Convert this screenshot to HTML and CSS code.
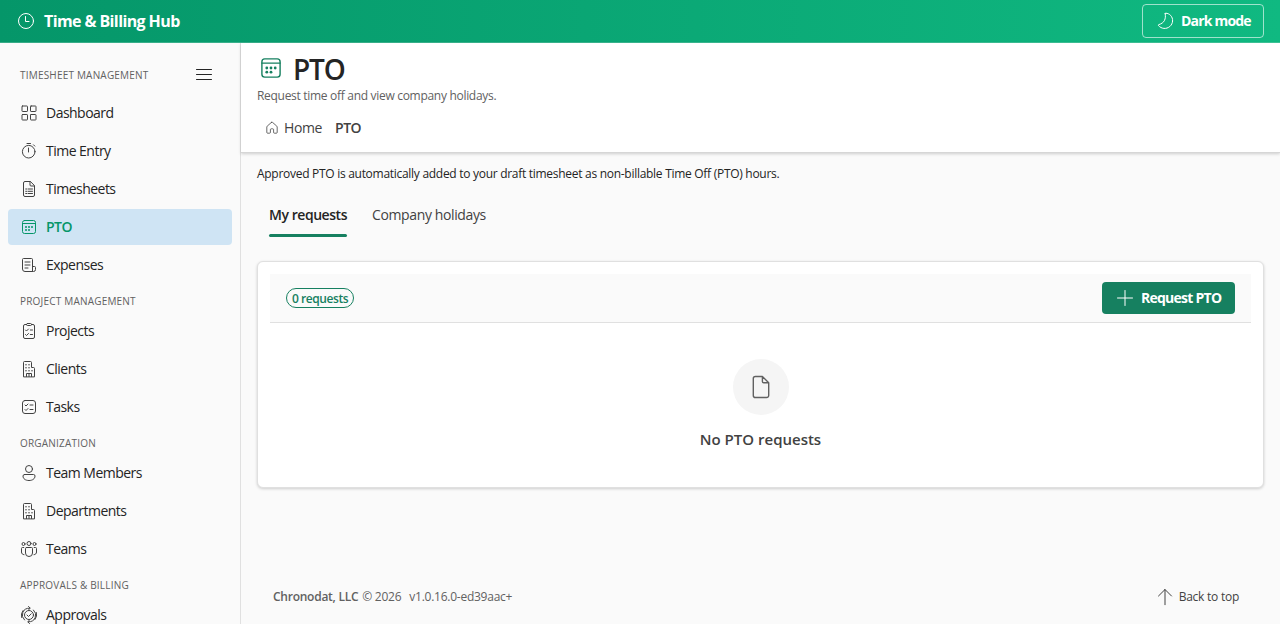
FILE: index.html
```
<!doctype html>
<html lang="en">
  <head>
    <title>PTO - Time &amp; Billing Hub</title>
    <meta charset="UTF-8" />
    <meta name="viewport" content="width=device-width, initial-scale=1.0" />
    <link rel="stylesheet" href="styles.css">
  </head>

  <body>
    <svg class="sprite" xmlns="http://www.w3.org/2000/svg">
      <symbol id="i-clock" viewBox="0 0 20 20">
        <circle cx="10" cy="10" r="7.5" />
        <path d="M9.5 5.5v5h3.5" />
      </symbol>
      <symbol id="i-moon" viewBox="0 0 20 20">
        <path d="M10.200 2.700c.9 5.300-.7 9.300-6.600 11-.4.100-.5.500-.2.800 3 3.500 8 3.900 11.400 1 3.500-3 3.700-8 .8-11.100-1.300-1.400-3-2.100-4.900-2.200-.4 0-.6.100-.5.500z" />
      </symbol>
      <symbol id="i-menu" viewBox="0 0 20 20">
        <path d="M2.500 4.500h15M2.500 9.500h15M2.500 14.500h15" />
      </symbol>
      <symbol id="i-grid" viewBox="0 0 20 20">
        <rect x="3" y="3" width="5.500" height="5.500" rx=".6" />
        <rect x="11.500" y="3" width="5.500" height="5.500" rx=".6" />
        <rect x="3" y="11.500" width="5.500" height="5.500" rx=".6" />
        <rect x="11.500" y="11.500" width="5.500" height="5.500" rx=".6" />
      </symbol>
      <symbol id="i-timer" viewBox="0 0 20 20">
        <circle cx="9.700" cy="10.700" r="6.300" />
        <path d="M8 2.500h3.500M9.500 7v4M14.500 3.800l1.300 1.300" />
      </symbol>
      <symbol id="i-doc-list" viewBox="0 0 20 20">
        <path d="M11 2.500H6A1.500 1.500 0 0 0 4.500 4v12A1.500 1.500 0 0 0 6 17.500h8a1.500 1.500 0 0 0 1.500-1.500V7zM11 2.500V6a1 1 0 0 0 1 1h3.500M9 10h4.500M9 12.300h4.500M9 14.500h4.500M6.700 10h1M6.700 12.300h1M6.700 14.500h1" />
      </symbol>
      <symbol id="i-calendar" viewBox="0 0 20 20">
        <rect x="3.500" y="3.500" width="13" height="13" rx="2" />
        <path d="M3.500 6.500h13" />
        <g class="dots">
          <circle cx="7" cy="10" r="1" />
          <circle cx="10" cy="10" r="1" />
          <circle cx="13" cy="10" r="1" />
          <circle cx="7" cy="13" r="1" />
          <circle cx="10" cy="13" r="1" />
        </g>
      </symbol>
      <symbol id="i-receipt" viewBox="0 0 20 20">
        <path d="M13.500 16.500H6A2.500 2.500 0 0 1 3.500 14V4.500a1 1 0 0 1 1-1h8a1 1 0 0 1 1 1v12h1a2 2 0 0 0 2-2v-2a1 1 0 0 0-1-1h-2M6 7h5M6 10h5M6 13h3" />
      </symbol>
      <symbol id="i-clipboard" viewBox="0 0 20 20">
        <path d="M7.500 3.500H6A1.500 1.500 0 0 0 4.500 5v11A1.500 1.500 0 0 0 6 17.500h8a1.500 1.500 0 0 0 1.500-1.500V5A1.500 1.500 0 0 0 14 3.500h-1.500" />
        <rect x="7.500" y="2.500" width="5" height="2" rx="1" />
        <path d="M6.500 9l1 1 2-2M6.500 13.500l1 1 2-2M11.300 9h2.200M11.300 13.500h2.200" />
      </symbol>
      <symbol id="i-building" viewBox="0 0 20 20">
        <path d="M4.500 17.500V3.500a1 1 0 0 1 1-1h6a1 1 0 0 1 1 1v5h2a1 1 0 0 1 1 1v8zM7.500 17.500v-3h5v3M10 14.500v3" />
        <g class="dots">
          <circle cx="7" cy="5.700" r=".75" />
          <circle cx="10" cy="5.700" r=".75" />
          <circle cx="7" cy="8.700" r=".75" />
          <circle cx="10" cy="8.700" r=".75" />
          <circle cx="7" cy="11.700" r=".75" />
          <circle cx="10" cy="11.700" r=".75" />
          <circle cx="13" cy="11.700" r=".75" />
        </g>
      </symbol>
      <symbol id="i-tasks" viewBox="0 0 20 20">
        <rect x="3.500" y="3.500" width="13" height="13" rx="2.500" />
        <path d="M6 8l1 1 2-2M6 12.500l1 1 2-2M11 8h3M11 12.500h3" />
      </symbol>
      <symbol id="i-person" viewBox="0 0 20 20">
        <circle cx="10" cy="6" r="3.500" />
        <path d="M5.500 11.500h9a1.500 1.500 0 0 1 1.500 1.500c0 2.900-2.600 4.500-6 4.500s-6-1.600-6-4.500a1.500 1.500 0 0 1 1.500-1.500z" />
      </symbol>
      <symbol id="i-people" viewBox="0 0 20 20">
        <circle cx="10" cy="4.500" r="2" />
        <circle cx="4.500" cy="5" r="1.500" />
        <circle cx="15.500" cy="5" r="1.500" />
        <path d="M7.500 8.500h5a1 1 0 0 1 1 1V14a3.500 3.500 0 0 1-7 0V9.500a1 1 0 0 1 1-1zM4.800 8.500H3.500a1 1 0 0 0-1 1V13c0 1.600 1 2.600 2.500 2.700M15.200 8.500h1.300a1 1 0 0 1 1 1V13c0 1.600-1 2.600-2.500 2.700" />
      </symbol>
      <symbol id="i-approve" viewBox="0 0 20 20">
        <circle cx="10" cy="10" r="4.500" />
        <path d="M8 10l1.500 1.500 2.700-2.700M10.500 3.200a6.800 6.800 0 0 0-5 11.800M9.500 16.800a6.800 6.800 0 0 0 5-11.800M9.500 1.500l1.800 1.700-1.800 1.700M10.500 15.100l-1.800 1.700 1.800 1.700M2.600 12.500a7.800 7.800 0 0 1 1.400-7M17.400 7.500a7.800 7.800 0 0 1-1.400 7" />
      </symbol>
      <symbol id="i-home" viewBox="0 0 20 20">
        <path d="M9.300 3L4 7.700c-.3.300-.5.700-.5 1.100V15.500a1 1 0 0 0 1 1H7a1 1 0 0 0 1-1V12a1 1 0 0 1 1-1h2a1 1 0 0 1 1 1v3.500a1 1 0 0 0 1 1h2.500a1 1 0 0 0 1-1V8.800c0-.4-.2-.8-.5-1.100L10.700 3a1 1 0 0 0-1.400 0z" />
      </symbol>
      <symbol id="i-plus" viewBox="0 0 20 20">
        <path d="M10 2.500v15M2.500 10h15" />
      </symbol>
      <symbol id="i-doc" viewBox="0 0 20 20">
        <path d="M11 2.500H6A1.500 1.500 0 0 0 4.500 4v12A1.500 1.500 0 0 0 6 17.500h8a1.500 1.500 0 0 0 1.500-1.500V7zM11 2.500V6a1 1 0 0 0 1 1h3.500" />
      </symbol>
      <symbol id="i-arrow-up" viewBox="0 0 20 20">
        <path d="M10 17.700V2.500M3.500 9L10 2.500 16.500 9" />
      </symbol>
    </svg>

    <header class="topbar">
      <div class="brand">
        <svg class="icon"><use href="#i-clock" /></svg>
        <span>Time &amp; Billing Hub</span>
      </div>
      <button class="theme-btn">
        <svg class="icon"><use href="#i-moon" /></svg>
        <span>Dark mode</span>
      </button>
    </header>

    <div class="shell">
      <nav class="sidebar">
        <div class="nav-head">
          <span class="nav-label">Timesheet Management</span>
          <svg class="icon"><use href="#i-menu" /></svg>
        </div>
        <a class="nav-item"><svg class="icon"><use href="#i-grid" /></svg>Dashboard</a>
        <a class="nav-item"><svg class="icon"><use href="#i-timer" /></svg>Time Entry</a>
        <a class="nav-item"><svg class="icon"><use href="#i-doc-list" /></svg>Timesheets</a>
        <a class="nav-item active"><svg class="icon"><use href="#i-calendar" /></svg>PTO</a>
        <a class="nav-item"><svg class="icon"><use href="#i-receipt" /></svg>Expenses</a>
        <div class="nav-label">Project Management</div>
        <a class="nav-item"><svg class="icon"><use href="#i-clipboard" /></svg>Projects</a>
        <a class="nav-item"><svg class="icon"><use href="#i-building" /></svg>Clients</a>
        <a class="nav-item"><svg class="icon"><use href="#i-tasks" /></svg>Tasks</a>
        <div class="nav-label">Organization</div>
        <a class="nav-item"><svg class="icon"><use href="#i-person" /></svg>Team Members</a>
        <a class="nav-item"><svg class="icon"><use href="#i-building" /></svg>Departments</a>
        <a class="nav-item"><svg class="icon"><use href="#i-people" /></svg>Teams</a>
        <div class="nav-label">Approvals &amp; Billing</div>
        <a class="nav-item"><svg class="icon"><use href="#i-approve" /></svg>Approvals</a>
      </nav>

      <main class="main">
        <section class="page-head">
          <div class="title-row">
            <svg class="icon"><use href="#i-calendar" /></svg>
            <h1>PTO</h1>
          </div>
          <p class="subtitle">Request time off and view company holidays.</p>
          <div class="breadcrumb">
            <svg class="icon"><use href="#i-home" /></svg>
            <a>Home</a>
            <strong>PTO</strong>
          </div>
        </section>

        <section class="content">
          <p class="hint">Approved PTO is automatically added to your draft timesheet as non-billable Time Off (PTO) hours.</p>
          <div class="tabs">
            <button class="tab selected">My requests</button>
            <button class="tab">Company holidays</button>
          </div>
          <div class="card">
            <div class="toolbar">
              <span class="badge">0 requests</span>
              <button class="primary-btn">
                <svg class="icon"><use href="#i-plus" /></svg>
                <span>Request PTO</span>
              </button>
            </div>
            <div class="empty">
              <div class="empty-icon"><svg class="icon"><use href="#i-doc" /></svg></div>
              <div class="empty-title">No PTO requests</div>
            </div>
          </div>
        </section>

        <footer class="footer">
          <div><strong>Chronodat, LLC</strong> <span class="year">© 2026</span><span class="version">v1.0.16.0-ed39aac+</span></div>
          <a class="to-top"><svg class="icon"><use href="#i-arrow-up" /></svg><span>Back to top</span></a>
        </footer>
      </main>
    </div>
  </body>
</html>
```
FILE: styles.css
```
* {
  box-sizing: border-box;
}
body {
  margin: 0;
  height: 100vh;
  display: flex;
  flex-direction: column;
  overflow: hidden;
  font: 400 14px/20px 'Open Sans', 'Noto Sans', sans-serif;
  letter-spacing: -0.38px;
  color: #242424;
  background: #fafafa;
}
h1,
p {
  margin: 0;
}
strong {
  font-weight: 600;
}
button {
  font: inherit;
  letter-spacing: inherit;
  color: inherit;
  background: none;
  border: 0;
  padding: 0;
}
.sprite {
  display: none;
}
.icon {
  width: 20px;
  height: 20px;
  flex: none;
  fill: none;
  stroke: currentColor;
  stroke-width: 1;
  stroke-linecap: round;
  stroke-linejoin: round;
}
.dots {
  fill: currentColor;
  stroke: none;
}

/* Top bar */
.topbar {
  flex: none;
  display: flex;
  align-items: center;
  justify-content: space-between;
  height: 43px;
  padding: 0 16px;
  color: #ffffff;
  background: linear-gradient(90deg, #059669, #10b981);
  border-bottom: 1px solid rgba(255, 255, 255, 0.2);
}
.brand {
  display: flex;
  align-items: center;
  gap: 8px;
  font-size: 16px;
  font-weight: 700;
  letter-spacing: -0.6px;
}
.theme-btn {
  display: flex;
  align-items: center;
  gap: 6px;
  height: 34px;
  width: 122px;
  padding-left: 12px;
  border: 1px solid rgba(255, 255, 255, 0.6);
  border-radius: 4px;
  font-weight: 700;
  letter-spacing: -0.8px;
}

/* Sidebar */
.shell {
  flex: 1;
  min-height: 0;
  display: flex;
}
.sidebar {
  flex: none;
  width: 241px;
  padding: 0 8px;
  border-right: 1px solid #e0e0e0;
  overflow: hidden;
}
.nav-head {
  display: flex;
  align-items: flex-start;
  justify-content: space-between;
  height: 52px;
  padding: 22px 18px 0 0;
}
.nav-head .nav-label {
  height: 20px;
  line-height: 20px;
}
.nav-label {
  height: 28px;
  padding-left: 12px;
  font-size: 10px;
  line-height: 32px;
  letter-spacing: 0.2px;
  text-transform: uppercase;
  color: #616161;
}
.nav-item {
  display: flex;
  align-items: center;
  gap: 7px;
  width: 224px;
  height: 36px;
  margin-bottom: 2px;
  padding-left: 11px;
  border-radius: 4px;
  letter-spacing: -0.52px;
}
.nav-item .icon {
  color: #424242;
}
.nav-item.active {
  background: #cfe4f4;
  color: #059669;
  font-weight: 600;
}
.nav-item.active .icon {
  color: #059669;
}

/* Page header */
.main {
  flex: 1;
  min-width: 0;
  display: flex;
  flex-direction: column;
}
.page-head {
  height: 110px;
  padding: 8px 16px 0;
  background: #ffffff;
  border-bottom: 1px solid #d6d6d6;
  box-shadow: 0 1px 3px rgba(0, 0, 0, 0.18);
}
.title-row {
  display: flex;
  align-items: center;
  gap: 8px;
  height: 36px;
}
.title-row .icon {
  width: 28px;
  height: 28px;
  margin-bottom: 2px;
  color: #168060;
}
h1 {
  font-size: 28px;
  line-height: 36px;
  font-weight: 600;
  letter-spacing: -1.1px;
}
.subtitle {
  font-size: 12px;
  line-height: 18px;
  letter-spacing: -0.3px;
  color: #616161;
}
.breadcrumb {
  display: flex;
  align-items: center;
  margin-top: 13px;
  padding-left: 7px;
  color: #424242;
}
.breadcrumb .icon {
  width: 16px;
  height: 16px;
  margin-right: 4px;
}
.breadcrumb strong {
  margin-left: 13px;
  letter-spacing: -0.5px;
}

/* Content */
.content {
  padding: 12px 16px 0;
}
.hint {
  font-size: 12px;
  line-height: 18px;
  letter-spacing: -0.285px;
}
.tabs {
  display: flex;
  gap: 25px;
  height: 54px;
  margin-top: 10px;
  padding-left: 12px;
  align-items: flex-start;
}
.tab {
  height: 44px;
  padding-bottom: 1px;
  color: #424242;
  position: relative;
}
.tab.selected {
  color: #242424;
  font-weight: 600;
  letter-spacing: -0.45px;
}
.tab.selected::after {
  content: '';
  position: absolute;
  left: 0;
  right: 0;
  bottom: 0;
  height: 3px;
  border-radius: 2px;
  background: #168060;
}
.card {
  height: 227px;
  margin-top: 14px;
  padding: 12px;
  background: #ffffff;
  border: 1px solid #e0e0e0;
  border-radius: 6px;
  box-shadow: 0 1px 3px rgba(0, 0, 0, 0.18);
}
.toolbar {
  display: flex;
  align-items: center;
  justify-content: space-between;
  height: 49px;
  padding: 0 16px;
  background: #fafafa;
  border-bottom: 1px solid #e0e0e0;
}
.badge {
  height: 20px;
  padding: 0 5px;
  border: 1px solid #168060;
  border-radius: 10px;
  color: #168060;
  font-size: 12px;
  font-weight: 600;
  line-height: 19px;
  letter-spacing: -0.44px;
}
.primary-btn {
  display: flex;
  align-items: center;
  gap: 6px;
  width: 133px;
  height: 32px;
  padding-left: 13px;
  border-radius: 4px;
  background: #168060;
  color: #ffffff;
  font-weight: 700;
  letter-spacing: -0.75px;
}
.empty {
  display: flex;
  flex-direction: column;
  align-items: center;
  padding-top: 36px;
}
.empty-icon {
  display: flex;
  align-items: center;
  justify-content: center;
  width: 56px;
  height: 56px;
  border-radius: 50%;
  background: #f5f5f5;
  color: #616161;
}
.empty-icon .icon {
  width: 28px;
  height: 28px;
}
.empty-title {
  margin-top: 13px;
  font-size: 15px;
  line-height: 22px;
  font-weight: 600;
  letter-spacing: 0;
  color: #424242;
}

/* Footer */
.footer {
  display: flex;
  align-items: center;
  justify-content: space-between;
  margin-top: auto;
  height: 56px;
  padding: 2px 41px 0 32px;
  font-size: 12px;
  letter-spacing: -0.25px;
  color: #616161;
}
.year {
  margin-left: 1px;
}
.version {
  margin-left: 8px;
}
.to-top {
  display: flex;
  align-items: center;
  gap: 4px;
  color: #424242;
}
```
